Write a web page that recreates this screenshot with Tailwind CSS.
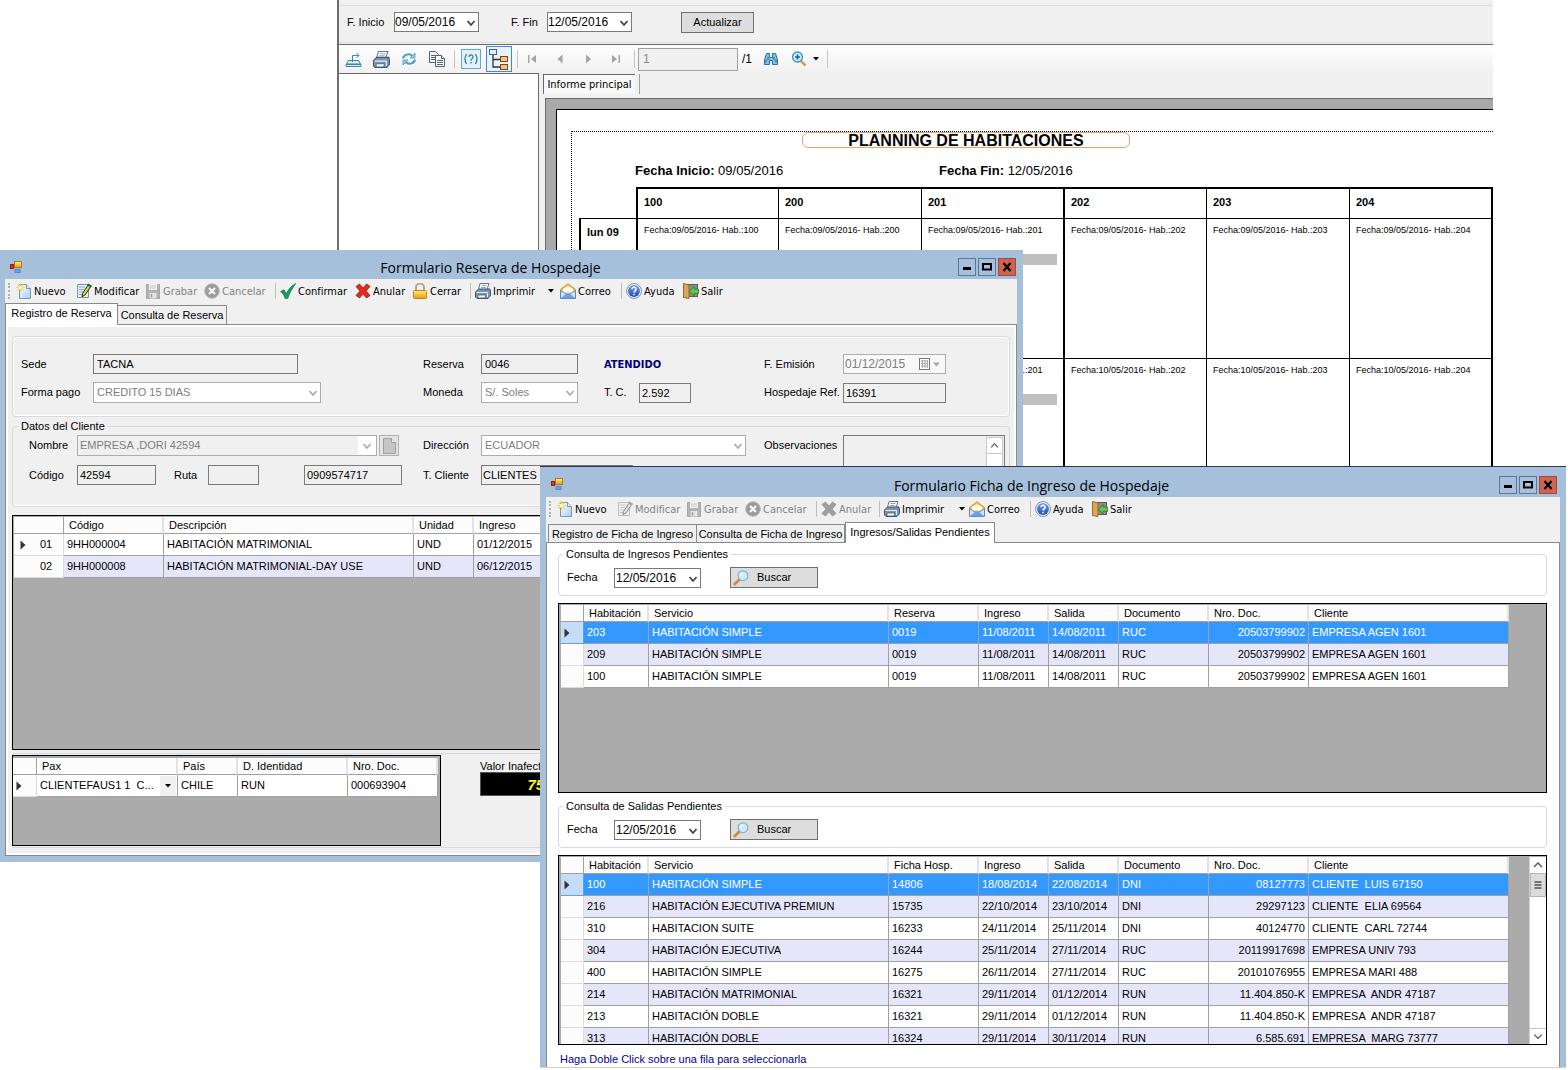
<!DOCTYPE html>
<html lang="es">
<head>
  <meta charset="UTF-8">
  <meta name="viewport" content="width=device-width, initial-scale=1.0">
  <title>Gestión de Hospedaje</title>
  <script src="https://cdn.jsdelivr.net/npm/@tailwindcss/browser@4"></script>
</head>
<body class="bg-white text-black text-[11px] leading-[13px] font-['Liberation_Sans',Arial,sans-serif]">

  <!-- shared icons -->
  <svg class="absolute size-0" aria-hidden="true">
    <defs>
      <linearGradient id="gPage" x1="0" y1="0" x2="1" y2="1"><stop offset="0" stop-color="#fff"/><stop offset="1" stop-color="#a9cdf5"/></linearGradient>
      <linearGradient id="gGold" x1="0" y1="0" x2="0" y2="1"><stop offset="0" stop-color="#fdf07a"/><stop offset="1" stop-color="#e89a10"/></linearGradient>
      <linearGradient id="gBlue" x1="0" y1="0" x2="0" y2="1"><stop offset="0" stop-color="#6f9be8"/><stop offset="1" stop-color="#1f4fb5"/></linearGradient>
    </defs>
    <symbol id="i-app" viewBox="0 0 14 14">
      <rect x="5.5" y="1.5" width="7" height="6" fill="url(#gGold)" stroke="#b07a1a"/>
      <rect x="1.5" y="4.5" width="3" height="4" fill="#d8382a" stroke="#8e1f14"/>
      <rect x="6" y="9.5" width="5" height="3" fill="#6d9fee" stroke="#5585d8"/>
    </symbol>
    <symbol id="i-new" viewBox="0 0 16 16">
      <path d="M3.5 1.5h7l4 4v10h-11z" fill="url(#gPage)" stroke="#7d95b5"/>
      <path d="M10.5 1.5v4h4" fill="#dcebfb" stroke="#7d95b5"/>
      <path d="M4.5 0v9M0 4.500h9M1.500 1.500l6 6M7.500 1.500l-6 6" stroke="#f0d860" stroke-width="1.2"/>
      <circle cx="4.5" cy="4.5" r="1.6" fill="#fffbd0"/>
    </symbol>
    <symbol id="i-edit" viewBox="0 0 16 16">
      <path d="M1.5 1.5h11v13h-11z" fill="#e6f0fb" stroke="#7a92b0"/>
      <path d="M3 4h6M3 6.5h5M3 9h4M3 11.5h7" stroke="#7fa6d6" stroke-width="1.2"/>
      <path d="M12.5 1.5l2.500 1.500-6 9-3 1.700.5-3.200z" fill="#d9df3c" stroke="#222"/>
      <path d="M11.500 1.500l4 2.200" stroke="#1b6a3a" stroke-width="2"/>
    </symbol>
    <symbol id="i-save" viewBox="0 0 16 16">
      <path d="M1.5 1.500h13v14h-13z" fill="#a4a4a4" stroke="#949494"/>
      <path d="M4 1h8v6H4z" fill="#efefef"/>
      <path d="M5 3h6M5 5h6" stroke="#c4c4c4"/>
      <path d="M4.500 10h7v5.500h-7z" fill="#e2e2e2"/>
      <path d="M6.500 11v3.500" stroke="#8a8a8a" stroke-width="1.500"/>
    </symbol>
    <symbol id="i-cancel" viewBox="0 0 16 16">
      <circle cx="8" cy="8" r="7.3" fill="#9b9b9b" stroke="#b9b9b9"/>
      <path d="M5 5l6 6M11 5l-6 6" stroke="#f6f6f6" stroke-width="2.3"/>
    </symbol>
    <symbol id="i-check" viewBox="0 0 16 16">
      <path d="M.5 8.500l3.500-1.800 2.300 3.800C8.500 6 11.500 2.500 15.800.5 12.500 5 9.800 9.500 7.800 15.500H5C4.200 12.500 2.700 10.200.5 8.500z" fill="#159a62" stroke="#0c7a4b" stroke-width=".6"/>
    </symbol>
    <symbol id="i-x" viewBox="0 0 16 16">
      <path d="M4.500 1L8 5l3.500-4L15 3.500 11 8l4 4.500-3.500 2.500L8 11l-3.500 4L1 12.500 5 8 1 3.500z" fill="#dd2c1e" stroke="#a5170c" stroke-width=".8"/>
    </symbol>
    <symbol id="i-lock" viewBox="0 0 16 16">
      <path d="M4 8V4.500a4 4 0 0 1 8 0V8" fill="none" stroke="#b0a98e" stroke-width="2"/>
      <rect x="1.500" y="7.500" width="13" height="8" rx="1" fill="url(#gGold)" stroke="#c58412"/>
    </symbol>
    <symbol id="i-print" viewBox="0 0 16 16">
      <path d="M5 .5h9l-2 6H3.500z" fill="#fff" stroke="#5f7896"/>
      <path d="M6.500 2.500h5M6 4.500h5" stroke="#8ba7c9"/>
      <path d="M.5 9l3-3h11.500l.5 3v3.500l-2.500 3H2l-1.500-1.500z" fill="#7d93b0" stroke="#3f5571"/>
      <path d="M1.500 9.500h11V14" fill="none" stroke="#e6edf5"/>
      <path d="M3 12h8l-1 3H3z" fill="#f5f8fb" stroke="#3f5571" stroke-width=".7"/>
    </symbol>
    <symbol id="i-mail" viewBox="0 0 16 16">
      <path d="M.5 6.500L8 .8l7.500 5.700v8.500H.5z" fill="#f6c56a" stroke="#c98b2c"/>
      <path d="M3 6L8 3.300 13 6v3.500H3z" fill="#fffbe9"/>
      <path d="M.5 7.500L6 11h4l5.500-3.500v8H.5z" fill="#cfe3fa" stroke="#5c88c4"/>
      <path d="M.8 15.200L6 11h4l5.200 4.200z" fill="#6f9fe0"/>
    </symbol>
    <symbol id="i-help" viewBox="0 0 16 16">
      <circle cx="8" cy="8" r="7.4" fill="#fff" stroke="#6f8cc0"/>
      <circle cx="8" cy="8" r="6" fill="url(#gBlue)"/>
      <path d="M6 6.300a2 2 0 1 1 3 1.700c-.8.5-1 .8-1 1.500M8 10.800v1.400" fill="none" stroke="#fff" stroke-width="1.6"/>
    </symbol>
    <symbol id="i-exit" viewBox="0 0 16 16">
      <rect x="5.5" y="1.500" width="9" height="12" fill="#8b8d88" stroke="#5c5c55"/>
      <path d="M.5.500l5.500 1.500v13.500l-5.500-1z" fill="#dba75c" stroke="#9a6a27"/>
      <path d="M15.500 6v4.500H11V13L6.500 8.200 11 3.500V6z" fill="#62c356" stroke="#2b7a26" stroke-width=".8"/>
    </symbol>
    <symbol id="i-search" viewBox="0 0 16 16">
      <path d="M6.500 9.500L1.800 14" stroke="#d68a3c" stroke-width="3" stroke-linecap="round"/>
      <circle cx="10" cy="5.700" r="4.900" fill="#cfeafb" stroke="#8aaed0" stroke-width="1.2"/>
      <path d="M7.500 5.500A2.700 2.700 0 0 1 10 3" fill="none" stroke="#fff" stroke-width="1.3"/>
    </symbol>
    <symbol id="i-chev" viewBox="0 0 10 10"><path d="M1.500 3L5 7l3.500-4" fill="none" stroke="currentColor" stroke-width="1.8"/></symbol>
    <symbol id="i-caret" viewBox="0 0 6 4"><path d="M0 0h6L3 3.500z" fill="currentColor"/></symbol>
    <symbol id="i-row" viewBox="0 0 6 10"><path d="M.5.500v9L5.500 5z" fill="#333"/></symbol>
    <symbol id="i-min" viewBox="0 0 16 16"><path d="M4 9.500h8" stroke="#000" stroke-width="3"/></symbol>
    <symbol id="i-max" viewBox="0 0 16 16"><rect x="4" y="5" width="8" height="5.500" fill="none" stroke="#000" stroke-width="2"/></symbol>
    <symbol id="i-close" viewBox="0 0 16 16"><path d="M4.500 4l7 8M11.500 4l-7 8" stroke="#000" stroke-width="2.2"/></symbol>
  </svg>

  <main class="relative min-h-screen overflow-hidden">

    <!-- Planning -->
    <section class="absolute top-0 left-[337px] right-[75px] overflow-hidden border-l-2 border-[#6e6e6e] bg-[#f0f0f0]">
      <div class="h-[5px]"></div>
      <div class="flex h-[38px] items-center border-y border-[#d9dde2] pb-1 pl-2">
        <label for="ini" class="w-[47px]">F. Inicio</label>
        <span class="relative">
          <select id="ini" class="block h-5 w-[85px] appearance-none border border-[#7a7a7a] bg-white text-[12px] leading-4"><option>09/05/2016</option></select>
          <svg class="pointer-events-none absolute top-[6px] right-[3px] size-[10px] text-[#444]"><use href="#i-chev"/></svg>
        </span>
        <label for="fin" class="ml-8 w-9">F. Fin</label>
        <span class="relative">
          <select id="fin" class="block h-5 w-[85px] appearance-none border border-[#7a7a7a] bg-white text-[12px] leading-4"><option>12/05/2016</option></select>
          <svg class="pointer-events-none absolute top-[6px] right-[3px] size-[10px] text-[#444]"><use href="#i-chev"/></svg>
        </span>
        <button class="ml-[49px] h-[21px] w-[73px] border border-[#707070] bg-[#dddddd]">Actualizar</button>
      </div>
      <div class="h-0.5 border-b border-[#696969]"></div>
      <div class="flex h-7 items-center bg-linear-to-b from-white to-[#f0f0f0]">
        <button aria-label="Exportar" class="flex w-7 justify-center"><svg class="size-[17px]" viewBox="0 0 17 17" fill="none" stroke="#3d87a8"><path d="M3.5 9.500h10l2 3.500H1.500zM1 13.500h15v2H1z" fill="#d8eef6"/><path d="M7.500 11V4.500h6M11.500 2L14 4.500 11.500 7"/></svg></button>
        <button aria-label="Imprimir informe" class="flex w-7 justify-center"><svg class="size-[17px]"><use href="#i-print"/></svg></button>
        <button aria-label="Refrescar" class="flex w-7 justify-center"><svg class="size-4" viewBox="0 0 16 16" fill="none" stroke="#4a9cc4" stroke-width="2"><path d="M2 7.500C2.500 4 8 1.500 11.500 5M14 8.500C13.500 12 8 14.500 4.500 11"/><path d="M14 2v5H9zM2 14V9h5z" fill="#8fd0ea" stroke-width=".8"/></svg></button>
        <button aria-label="Copiar" class="flex w-7 justify-center"><svg class="size-[18px]" viewBox="0 0 18 18" fill="#fff" stroke="#4c6378"><path d="M1.500 1.500h6l3 3v8h-9z"/><path d="M3 5.500h5M3 7.500h5M3 9.500h4"/><path d="M7.500 5.500h6l3 3v8h-9z"/><path d="M13.500 5.500v3h3M9 10.500h6M9 12.500h6M9 14.500h6"/></svg></button>
        <span class="ml-[3px] h-[18px] w-px bg-[#c4c4c4]"></span>
        <button aria-label="Parámetros" class="ml-1.5 h-5 w-5 border border-[#5fa8d8] bg-[#e2f1fb]"><svg class="size-[18px]" viewBox="0 0 18 18" fill="none" stroke="#2f7fb0" stroke-width="1.3"><path d="M4.500 4q-3 5 0 10M13.500 4q3 5 0 10M7 7a2 2 0 1 1 3 1.700q-1 .7-1 2M9 12v1.500"/></svg></button>
        <button aria-label="Árbol de grupos" class="ml-[5px] flex h-[26px] w-[26px] items-center justify-center border border-[#3c8ad6] bg-[#e9f3fc]"><svg class="size-[22px]" viewBox="0 0 22 22"><path d="M5 7v12h7M5 11.500h7" fill="none" stroke="#333" stroke-width="1.3"/><rect x="1.500" y="1.500" width="7" height="5" fill="#e4edfb" stroke="#4a5f9a"/><rect x="12.500" y="8.500" width="7" height="5" fill="#f3c48a" stroke="#7a4a16"/><rect x="12.500" y="16.500" width="7" height="5" fill="#f3c48a" stroke="#7a4a16"/></svg></button>
        <span class="ml-[5px] h-[18px] w-px bg-[#c4c4c4]"></span>
        <button disabled aria-label="Primera" class="flex w-7 justify-center"><svg class="size-[10px]" viewBox="0 0 10 10" fill="#a3a3a3"><path d="M1 1h1.500v8H1zM9 1v8L4 5z"/></svg></button>
        <button disabled aria-label="Anterior" class="flex w-7 justify-center"><svg class="size-[10px]" viewBox="0 0 10 10" fill="#a3a3a3"><path d="M7.500.5v9L2.500 5z"/></svg></button>
        <button disabled aria-label="Siguiente" class="flex w-7 justify-center"><svg class="size-[10px]" viewBox="0 0 10 10" fill="#a3a3a3"><path d="M3 .5v9L8 5z"/></svg></button>
        <button disabled aria-label="Última" class="flex w-7 justify-center"><svg class="size-[10px]" viewBox="0 0 10 10" fill="#a3a3a3"><path d="M7.500 1H9v8H7.500zM1 1v8l5-4z"/></svg></button>
        <span class="ml-1 h-[18px] w-px bg-[#c4c4c4]"></span>
        <input aria-label="Página" value="1" class="ml-[3px] h-[23px] w-[100px] border border-[#a0a0a0] bg-[#f0f0f0] px-1 text-[12px] text-[#8a8a8a]">
        <span class="ml-1 w-[15px] text-[12px]">/1</span>
        <button aria-label="Buscar texto" class="flex w-7 justify-center"><svg class="size-4" viewBox="0 0 16 16" fill="#7fc4e4" stroke="#2d6f9c"><path d="M3.500 2.500h3v4h3v-4h3l2 6v5h-5v-4h-3v4h-5v-5z"/><path d="M3 8.500v3M5 6v3M11 6v3M13 8.500v3" stroke="#1d5f8c"/></svg></button>
        <button aria-label="Zoom" class="flex w-7 justify-center"><svg class="size-4" viewBox="0 0 16 16"><path d="M10 10l4.500 4.500" stroke="#d99a55" stroke-width="2.5"/><circle cx="6.500" cy="6" r="5" fill="#c8ebf8" stroke="#3b93c4" stroke-width="1.3"/><path d="M6.500 3.500v5M4 6h5" stroke="#1d5f9c" stroke-width="1.5"/></svg></button>
        <svg class="h-1 w-1.5"><use href="#i-caret"/></svg>
        <span class="ml-2 h-[18px] w-px bg-[#c4c4c4]"></span>
      </div>
      <div class="flex">
        <div class="w-[200px] shrink-0 border-t border-r border-[#696969] bg-white"></div>
        <div class="min-w-0 flex-1 pl-1">
          <div class="flex h-[25px] items-start gap-1 pt-px">
            <button class="h-5 w-[92px] border-t border-l border-[#696969] bg-[#f8f8f8] font-['DejaVu_Sans_Condensed','DejaVu_Sans',sans-serif] whitespace-nowrap">Informe principal</button>
            <span class="h-5 w-px bg-[#a0a0a0]"></span>
          </div>
          <div class="ml-0.5 overflow-hidden border-t border-l border-[#696969] bg-[#a9a9a9] pt-[10px] pl-[10px]">
            <div class="border-t border-l border-black bg-white pt-[21px] pl-[14px]">
              <div class="border-t border-l border-dotted border-black">
                <h1 class="ml-[230px] h-4 w-[328px] rounded-md border border-[#e0a468] text-center text-[16px] leading-4 font-bold whitespace-nowrap">PLANNING DE HABITACIONES</h1>
                <div class="mt-[15px] ml-[63px] flex text-[13px] leading-4">
                  <p class="w-[304px]"><b>Fecha Inicio:</b> 09/05/2016</p>
                  <p><b>Fecha Fin:</b> 12/05/2016</p>
                </div>
                <table id="planning" class="mt-2 ml-[7px] w-[914px] table-fixed border-separate border-spacing-0 text-left">
                  <colgroup><col class="w-[57px]"><col class="w-[142px]"><col class="w-[143px]"><col class="w-[142px]"><col class="w-[143px]"><col class="w-[143px]"><col class="w-[144px]"></colgroup>
                  <thead></thead>
                  <tbody></tbody>
                </table>
              </div>
            </div>
          </div>
        </div>
      </div>
    </section>

    <!-- Reserva de Hospedaje -->
    <section class="absolute top-[250px] left-0 w-[1023px] bg-[#a6c0dc] pr-1.5 pb-1.5 pl-[5px]">
      <header class="flex h-[29px] items-center">
        <svg class="mt-1 ml-1 size-[14px]"><use href="#i-app"/></svg>
        <h2 class="mt-1.5 flex-1 text-center font-['Open_Sans',sans-serif] text-[14px] leading-5">Formulario Reserva de Hospedaje</h2>
        <div class="mt-1 mr-px flex gap-0.5">
          <button aria-label="Minimizar" class="size-[18px] border border-[#5b7796]"><svg class="size-4"><use href="#i-min"/></svg></button>
          <button aria-label="Maximizar" class="size-[18px] border border-[#5b7796]"><svg class="size-4"><use href="#i-max"/></svg></button>
          <button aria-label="Cerrar ventana" class="size-[18px] border border-[#a04a3c] bg-[#cf6350]"><svg class="size-4"><use href="#i-close"/></svg></button>
        </div>
      </header>
      <div class="bg-[#f0f0f0]">
        <div class="flex h-6 items-center pl-[3px] font-['DejaVu_Sans_Condensed','DejaVu_Sans',sans-serif]">
          <span class="mr-1.5 h-4 border-l-2 border-dotted border-[#b0b0b0]"></span>
          <button class="flex w-[60px] items-center gap-0.5"><svg class="size-4 shrink-0"><use href="#i-new"/></svg>Nuevo</button>
          <button class="flex w-[69px] items-center gap-0.5"><svg class="size-4 shrink-0"><use href="#i-edit"/></svg>Modificar</button>
          <button disabled class="flex w-[59px] items-center gap-0.5 text-[#838383]"><svg class="size-4 shrink-0 opacity-80"><use href="#i-save"/></svg>Grabar</button>
          <button disabled class="flex w-[71px] items-center gap-0.5 text-[#838383]"><svg class="size-4 shrink-0"><use href="#i-cancel"/></svg>Cancelar</button>
          <span class="mr-1 h-4 w-px bg-[#bdbdbd]"></span>
          <button class="flex w-[75px] items-center gap-0.5"><svg class="size-4 shrink-0"><use href="#i-check"/></svg>Confirmar</button>
          <button class="flex w-[57px] items-center gap-0.5"><svg class="size-4 shrink-0"><use href="#i-x"/></svg>Anular</button>
          <button class="flex w-[58px] items-center gap-0.5"><svg class="size-4 shrink-0"><use href="#i-lock"/></svg>Cerrar</button>
          <span class="mr-1 h-4 w-px bg-[#bdbdbd]"></span>
          <button class="flex w-[85px] items-center gap-0.5"><svg class="size-4 shrink-0"><use href="#i-print"/></svg>Imprimir<svg class="mr-1.5 ml-auto h-1 w-1.5"><use href="#i-caret"/></svg></button>
          <button class="flex w-[61px] items-center gap-0.5"><svg class="size-4 shrink-0"><use href="#i-mail"/></svg>Correo</button>
          <span class="mr-1 h-4 w-px bg-[#bdbdbd]"></span>
          <button class="flex w-[57px] items-center gap-0.5"><svg class="size-4 shrink-0"><use href="#i-help"/></svg>Ayuda</button>
          <button class="flex items-center gap-0.5"><svg class="size-4 shrink-0"><use href="#i-exit"/></svg>Salir</button>
        </div>
        <div class="flex h-[21px] items-end">
          <button class="z-10 -mb-px h-[22px] w-[113px] border border-b-0 border-[#8a8a8a] bg-white pb-0.5">Registro de Reserva</button>
          <button class="h-[19px] w-[109px] border border-b-0 border-l-0 border-[#8a8a8a] bg-[#f0f0f0] pt-px whitespace-nowrap">Consulta de Reserva</button>
        </div>
        <div class="border border-[#8a8a8a] bg-white p-[2px]">
          <div class="bg-[#f0f0f0] px-1 pt-[9px] pb-[5px]">
            <div class="grid h-[81px] grid-cols-[72px_330px_58px_123px_35px_125px_79px_1fr] content-start items-center gap-y-2 rounded-sm border border-[#d5dae0] pt-[17px] pl-2 shadow-[inset_0_0_0_1px_#fff]">
              <label for="sede">Sede</label>
              <input id="sede" readonly value="TACNA" class="h-5 w-[205px] border border-[#7a7a7a] bg-[#f0f0f0] px-[3px]">
              <label for="reserva">Reserva</label>
              <input id="reserva" readonly value="0046" class="h-5 w-[97px] border border-[#7a7a7a] bg-[#f0f0f0] px-[3px]">
              <strong class="col-span-2 font-['DejaVu_Sans_Condensed','DejaVu_Sans',sans-serif] text-[#000080]">ATENDIDO</strong>
              <label for="emision">F. Emisión</label>
              <span class="relative w-[103px]">
                <input id="emision" disabled value="01/12/2015" class="block h-5 w-full border border-[#adadad] bg-[#f8f8f8] px-px text-[12px] text-[#7d7d7d]">
                <svg class="absolute top-1 right-[5px] h-3 w-[22px]" viewBox="0 0 22 12"><rect x=".5" y=".5" width="10" height="11" fill="#fff" stroke="#777"/><path d="M2 3h7M2 5.500h7M2 8h7M3.500 2v8M6 2v8M8.500 2v8" stroke="#aaa"/><path d="M14 4.500h7l-3.500 4z" fill="#a8a8a8"/></svg>
              </span>
              <label for="pago">Forma pago</label>
              <span class="relative w-[228px]">
                <select id="pago" disabled class="block h-[21px] w-full appearance-none border border-[#adadad] bg-white px-[3px] text-[#7d7d7d] opacity-100"><option>CREDITO 15 DIAS</option></select>
                <svg class="absolute top-[6px] right-[3px] size-[10px] text-[#ababab]"><use href="#i-chev"/></svg>
              </span>
              <label for="moneda">Moneda</label>
              <span class="relative w-[97px]">
                <select id="moneda" disabled class="block h-[21px] w-full appearance-none border border-[#adadad] bg-white px-[3px] text-[#7d7d7d] opacity-100"><option>S/. Soles</option></select>
                <svg class="absolute top-[6px] right-[3px] size-[10px] text-[#ababab]"><use href="#i-chev"/></svg>
              </span>
              <label for="tc">T. C.</label>
              <input id="tc" readonly value="2.592" class="h-5 w-[52px] border border-[#7a7a7a] bg-[#f0f0f0] px-[2px]">
              <label for="ref" class="whitespace-nowrap">Hospedaje Ref.</label>
              <input id="ref" readonly value="16391" class="h-5 w-[103px] border border-[#7a7a7a] bg-[#f0f0f0] px-[2px]">
            </div>
            <fieldset class="mt-[3px] h-[87px] rounded-sm border border-[#d5dae0] pl-4 shadow-[inset_0_-1px_0_#fff]">
              <legend class="-ml-2.5 px-0.5">Datos del Cliente</legend>
              <div class="grid grid-cols-[48px_346px_58px_283px_79px_1fr] items-center gap-y-[9px] pt-0.5">
                <label for="nombre">Nombre</label>
                <span class="flex gap-0.5">
                  <span class="relative w-[300px]">
                    <select id="nombre" disabled class="block h-[21px] w-full appearance-none border border-[#adadad] bg-[#f0f0f0] px-[2px] text-[#7d7d7d] opacity-100"><option>EMPRESA ,DORI 42594</option></select>
                    <span class="absolute top-px right-px flex h-[19px] w-[18px] items-center justify-center bg-white"><svg class="size-[10px] text-[#ababab]"><use href="#i-chev"/></svg></span>
                  </span>
                  <button aria-label="Nuevo cliente" class="flex h-[21px] w-5 items-center justify-center border border-[#b0b0b0] bg-[#e4e4e4]"><svg class="h-4 w-[14px]" viewBox="0 0 14 16"><path d="M1.500.500h8l4 4v11h-12z" fill="#c6c6c6" stroke="#a0a0a0"/><path d="M9.500.500v4h4" fill="#f0f0f0" stroke="#a0a0a0"/></svg></button>
                </span>
                <label for="direccion">Dirección</label>
                <span class="relative w-[265px]">
                  <select id="direccion" disabled class="block h-[21px] w-full appearance-none border border-[#adadad] bg-white px-[3px] text-[#7d7d7d] opacity-100"><option>ECUADOR</option></select>
                  <svg class="absolute top-[6px] right-[3px] size-[10px] text-[#ababab]"><use href="#i-chev"/></svg>
                </span>
                <label for="obs">Observaciones</label>
                <span class="relative row-span-2 w-[162px]">
                  <textarea id="obs" class="block h-[50px] w-full resize-none border border-[#7a7a7a] bg-[#f0f0f0]"></textarea>
                  <span class="absolute top-0.5 right-0.5 h-[46px] w-[17px] border border-[#c8c8c8] bg-white"><svg class="h-4 w-[15px] border-b border-[#c8c8c8]" viewBox="0 0 15 16"><path d="M4 10l3.500-4 3.500 4" fill="none" stroke="#606060" stroke-width="1.3"/></svg></span>
                </span>
                <label for="codigo">Código</label>
                <span class="flex items-center">
                  <input id="codigo" readonly value="42594" class="h-5 w-[79px] border border-[#7a7a7a] bg-[#f0f0f0] px-[2px]">
                  <label for="ruta" class="ml-[18px] w-[34px]">Ruta</label>
                  <input id="ruta" readonly class="h-5 w-[51px] border border-[#7a7a7a] bg-[#f0f0f0]">
                  <input aria-label="Documento" readonly value="0909574717" class="ml-[45px] h-5 w-[98px] border border-[#7a7a7a] bg-[#f0f0f0] px-[2px]">
                </span>
                <label for="tcliente">T. Cliente</label>
                <input id="tcliente" readonly value="CLIENTES EMPRESA" class="h-5 w-[152px] border border-[#7a7a7a] bg-[#f0f0f0] px-px">
              </div>
            </fieldset>
            <div class="mt-2 h-[235px] overflow-hidden border border-black bg-[#ababab] pt-px pl-px">
              <table id="detalle" class="w-[570px] table-fixed border-separate border-spacing-0 text-left">
                <colgroup><col class="w-[50px]"><col class="w-[100px]"><col class="w-[250px]"><col class="w-[60px]"><col class="w-[110px]"></colgroup>
                <thead></thead>
                <tbody></tbody>
              </table>
            </div>
            <div class="mt-[3px] flex gap-[39px] border-y border-[#d5dae0] py-px">
              <div class="h-[91px] w-[429px] border border-black bg-[#ababab] pt-0.5">
                <table id="pax" class="w-[425px] table-fixed border-separate border-spacing-0 text-left">
                  <colgroup><col class="w-6"><col class="w-[141px]"><col class="w-[60px]"><col class="w-[110px]"><col class="w-[90px]"></colgroup>
                  <thead></thead>
                  <tbody></tbody>
                </table>
              </div>
              <div class="pt-[5px]">
                <label for="inafecto" class="block h-3 leading-3">Valor Inafecto</label>
                <input id="inafecto" readonly value="75.00" class="h-6 w-[90px] border border-[#555] bg-black pr-1 text-right text-[15px] font-bold text-[#ffff00] italic">
              </div>
            </div>
          </div>
        </div>
      </div>
    </section>

    <!-- Ficha de Ingreso -->
    <section class="absolute top-[466px] right-[2px] left-[540px] border-t border-b border-t-[#2d3b49] border-b-[#cfcfcf] bg-[#a6c0dc] px-1.5">
      <header class="flex h-[30px] items-center">
        <svg class="mt-1 ml-1 size-[14px]"><use href="#i-app"/></svg>
        <h2 class="mt-2 flex-1 text-center font-['Open_Sans',sans-serif] text-[14px] leading-5">Formulario Ficha de Ingreso de Hospedaje</h2>
        <div class="mt-1.5 mr-[3px] flex gap-0.5">
          <button aria-label="Minimizar" class="size-[18px] border border-[#5b7796]"><svg class="size-4"><use href="#i-min"/></svg></button>
          <button aria-label="Maximizar" class="size-[18px] border border-[#5b7796]"><svg class="size-4"><use href="#i-max"/></svg></button>
          <button aria-label="Cerrar ventana" class="size-[18px] border border-[#a04a3c] bg-[#cf6350]"><svg class="size-4"><use href="#i-close"/></svg></button>
        </div>
      </header>
      <div class="bg-[#f0f0f0]">
        <div class="flex h-6 items-center pl-[3px] font-['DejaVu_Sans_Condensed','DejaVu_Sans',sans-serif]">
          <span class="mr-1.5 h-4 border-l-2 border-dotted border-[#b0b0b0]"></span>
          <button class="flex w-[60px] items-center gap-0.5"><svg class="size-4 shrink-0"><use href="#i-new"/></svg>Nuevo</button>
          <button disabled class="flex w-[69px] items-center gap-0.5 text-[#838383]"><svg class="size-4 shrink-0 opacity-50 grayscale"><use href="#i-edit"/></svg>Modificar</button>
          <button disabled class="flex w-[59px] items-center gap-0.5 text-[#838383]"><svg class="size-4 shrink-0 opacity-80"><use href="#i-save"/></svg>Grabar</button>
          <button disabled class="flex w-[71px] items-center gap-0.5 text-[#838383]"><svg class="size-4 shrink-0"><use href="#i-cancel"/></svg>Cancelar</button>
          <span class="mr-1 h-4 w-px bg-[#bdbdbd]"></span>
          <button disabled class="flex w-[58px] items-center gap-0.5 text-[#838383]"><svg class="size-4 shrink-0 opacity-50 grayscale"><use href="#i-x"/></svg>Anular</button>
          <span class="mr-1 h-4 w-px bg-[#bdbdbd]"></span>
          <button class="flex w-[85px] items-center gap-0.5"><svg class="size-4 shrink-0"><use href="#i-print"/></svg>Imprimir<svg class="mr-1 ml-auto h-1 w-1.5"><use href="#i-caret"/></svg></button>
          <button class="flex w-[61px] items-center gap-0.5"><svg class="size-4 shrink-0"><use href="#i-mail"/></svg>Correo</button>
          <span class="mr-1 h-4 w-px bg-[#bdbdbd]"></span>
          <button class="flex w-[57px] items-center gap-0.5"><svg class="size-4 shrink-0"><use href="#i-help"/></svg>Ayuda</button>
          <button class="flex items-center gap-0.5"><svg class="size-4 shrink-0"><use href="#i-exit"/></svg>Salir</button>
        </div>
        <div class="flex h-[21px] items-end pl-0.5">
          <button class="h-[18px] w-[149px] border border-b-0 border-[#8a8a8a] pt-px whitespace-nowrap">Registro de Ficha de Ingreso</button>
          <button class="h-[18px] w-[148px] border border-b-0 border-l-0 border-[#8a8a8a] pt-px whitespace-nowrap">Consulta de Ficha de Ingreso</button>
          <button class="z-10 -mb-px h-[21px] w-[150px] border border-b-0 border-[#8a8a8a] bg-white pb-0.5 whitespace-nowrap">Ingresos/Salidas Pendientes</button>
        </div>
        <div class="border border-b-0 border-[#8a8a8a] bg-white pt-[5px] pr-3 pb-px pl-[11px]">
          <fieldset class="h-12 rounded-sm border border-[#d5dae0]">
            <legend class="ml-1 px-[3px]">Consulta de Ingresos Pendientes</legend>
            <div class="flex items-center pt-1.5 pl-2">
              <label for="f1" class="w-[47px]">Fecha</label>
              <span class="relative">
                <select id="f1" class="block h-5 w-[87px] appearance-none border border-[#7a7a7a] bg-white px-px text-[12px] leading-4"><option>12/05/2016</option></select>
                <svg class="pointer-events-none absolute top-[6px] right-[3px] size-[10px] text-[#444]"><use href="#i-chev"/></svg>
              </span>
              <button class="ml-[29px] flex h-[21px] w-[88px] items-center gap-2 border border-[#707070] bg-[#dddddd] pl-0.5"><svg class="size-4"><use href="#i-search"/></svg>Buscar</button>
            </div>
          </fieldset>
          <div class="mt-[7px] h-[190px] overflow-hidden border border-black bg-[#ababab] pt-px pl-0.5">
            <table id="ingresos" class="w-[948px] table-fixed border-separate border-spacing-0 text-left">
              <colgroup><col class="w-[23px]"><col class="w-[65px]"><col class="w-[240px]"><col class="w-[90px]"><col class="w-[70px]"><col class="w-[70px]"><col class="w-[90px]"><col class="w-[100px]"><col class="w-[200px]"></colgroup>
              <thead></thead>
              <tbody></tbody>
            </table>
          </div>
          <fieldset class="mt-[7px] h-12 rounded-sm border border-[#d5dae0]">
            <legend class="ml-1 px-[3px]">Consulta de Salidas Pendientes</legend>
            <div class="flex items-center pt-1.5 pl-2">
              <label for="f2" class="w-[47px]">Fecha</label>
              <span class="relative">
                <select id="f2" class="block h-5 w-[87px] appearance-none border border-[#7a7a7a] bg-white px-px text-[12px] leading-4"><option>12/05/2016</option></select>
                <svg class="pointer-events-none absolute top-[6px] right-[3px] size-[10px] text-[#444]"><use href="#i-chev"/></svg>
              </span>
              <button class="ml-[29px] flex h-[21px] w-[88px] items-center gap-2 border border-[#707070] bg-[#dddddd] pl-0.5"><svg class="size-4"><use href="#i-search"/></svg>Buscar</button>
            </div>
          </fieldset>
          <div class="mt-[7px] flex h-[190px] justify-between overflow-hidden border border-black bg-[#ababab] pt-px pl-0.5">
            <table id="salidas" class="w-[948px] shrink-0 table-fixed border-separate border-spacing-0 self-start text-left">
              <colgroup><col class="w-[23px]"><col class="w-[65px]"><col class="w-[240px]"><col class="w-[90px]"><col class="w-[70px]"><col class="w-[70px]"><col class="w-[90px]"><col class="w-[100px]"><col class="w-[200px]"></colgroup>
              <thead></thead>
              <tbody></tbody>
            </table>
            <div class="flex w-[17px] flex-col border-l border-[#d0d0d0] bg-white">
              <svg class="h-4 w-4" viewBox="0 0 16 16"><path d="M4 10l4-4 4 4" fill="none" stroke="#505050" stroke-width="1.3"/></svg>
              <svg class="h-6 w-4 border border-[#b5b5b5] bg-[#dcdcdc]" viewBox="0 0 14 22"><path d="M3.500 8h7M3.500 11h7M3.500 14h7" stroke="#505050" stroke-width="1.5"/></svg>
              <svg class="mt-auto h-4 w-4 border-t border-[#c8c8c8]" viewBox="0 0 16 16"><path d="M4 6l4 4 4-4" fill="none" stroke="#505050" stroke-width="1.3"/></svg>
            </div>
          </div>
          <p class="mt-2 ml-0.5 text-[#000099]">Haga Doble Click sobre una fila para seleccionarla</p>
        </div>
      </div>
    </section>
  </main>

  <script>
    const arrow = '<svg class="ml-[3px] h-[10px] w-[6px]"><use href="#i-row"/></svg>';

    // opts: number = numbered rows, select = first row highlighted, right = right-aligned column
    function fillGrid(id, cols, rows, opts = {}) {
      const table = document.getElementById(id);
      const th = cols.map(c => `<th class="h-[17px] border-r-2 border-b border-r-[#e3e3e3] border-b-[#a0a0a0] bg-[#fcfcfc] p-0 pl-[5px] font-normal whitespace-nowrap">${c}</th>`).join('');
      table.tHead.innerHTML = `<tr><th class="border-r border-b border-[#a0a0a0] bg-[#fcfcfc] p-0"></th>${th}</tr>`;
      table.tBodies[0].innerHTML = rows.map((r, i) => {
        const selected = opts.select && i === 0;
        const tone = selected ? 'bg-[#3399ff] text-white' : i % 2 ? 'bg-[#e6e6fa]' : 'bg-white';
        const markTone = selected ? 'bg-[#c5dcf8] border-[#5fa3d8]' : 'bg-[#fcfcfc] border-[#dcdcdc]';
        const mark = opts.number
          ? `<span class="flex items-center pl-1.5"><span class="w-5">${i === 0 ? '<svg class="h-[10px] w-[6px]"><use href="#i-row"/></svg>' : ''}</span>0${i + 1}</span>`
          : (i === 0 ? arrow : '');
        const tds = r.map((v, j) => `<td class="h-[22px] overflow-hidden border-r border-b border-[#a0a0a0] px-[3px] py-0 whitespace-pre ${j === opts.right ? 'text-right' : ''}">${v}</td>`).join('');
        return `<tr class="${tone}"><td class="border-r border-b p-0 ${markTone}">${mark}</td>${tds}</tr>`;
      }).join('');
    }

    fillGrid('detalle', ['Código', 'Descripción', 'Unidad', 'Ingreso'], [
      ['9HH000004', 'HABITACIÓN MATRIMONIAL', 'UND', '01/12/2015'],
      ['9HH000008', 'HABITACIÓN MATRIMONIAL-DAY USE', 'UND', '06/12/2015'],
    ], { number: true });

    const paxName = '<span class="flex items-center justify-between">CLIENTEFAUS1 1  C...<button aria-label="Elegir pax" class="-mr-0.5 flex h-5 w-4 items-center justify-center bg-[#f0f0f0]"><svg class="h-1 w-1.5"><use href="#i-caret"/></svg></button></span>';
    fillGrid('pax', ['Pax', 'País', 'D. Identidad', 'Nro. Doc.'], [[paxName, 'CHILE', 'RUN', '000693904']]);

    const rest = ['Ingreso', 'Salida', 'Documento', 'Nro. Doc.', 'Cliente'];
    fillGrid('ingresos', ['Habitación', 'Servicio', 'Reserva', ...rest], ['203', '209', '100'].map(h =>
      [h, 'HABITACIÓN SIMPLE', '0019', '11/08/2011', '14/08/2011', 'RUC', '20503799902', 'EMPRESA AGEN 1601']
    ), { select: true, right: 6 });

    fillGrid('salidas', ['Habitación', 'Servicio', 'Ficha Hosp.', ...rest], [
      ['100', 'HABITACIÓN SIMPLE', '14806', '18/08/2014', '22/08/2014', 'DNI', '08127773', 'CLIENTE  LUIS 67150'],
      ['216', 'HABITACIÓN EJECUTIVA PREMIUN', '15735', '22/10/2014', '23/10/2014', 'DNI', '29297123', 'CLIENTE  ELIA 69564'],
      ['310', 'HABITACION SUITE', '16233', '24/11/2014', '25/11/2014', 'DNI', '40124770', 'CLIENTE  CARL 72744'],
      ['304', 'HABITACIÓN EJECUTIVA', '16244', '25/11/2014', '27/11/2014', 'RUC', '20119917698', 'EMPRESA UNIV 793'],
      ['400', 'HABITACIÓN SIMPLE', '16275', '26/11/2014', '27/11/2014', 'RUC', '20101076955', 'EMPRESA MARI 488'],
      ['214', 'HABITACIÓN MATRIMONIAL', '16321', '29/11/2014', '01/12/2014', 'RUN', '11.404.850-K', 'EMPRESA  ANDR 47187'],
      ['213', 'HABITACIÓN DOBLE', '16321', '29/11/2014', '01/12/2014', 'RUN', '11.404.850-K', 'EMPRESA  ANDR 47187'],
      ['313', 'HABITACIÓN DOBLE', '16324', '29/11/2014', '30/11/2014', 'RUN', '6.585.691', 'EMPRESA  MARG 73777'],
    ], { select: true, right: 6 });

    // planning matrix: days x rooms
    const rooms = ['100', '200', '201', '202', '203', '204'];
    const days = [
      { name: 'lun 09', date: '09/05/2016', from: 0 },
      { name: '', date: '10/05/2016', from: 2 },
    ];
    const edge = i => (i === 0 || i === 3 ? 'border-l-2' : 'border-l') + (i === 5 ? ' border-r-2' : '');
    const planning = document.getElementById('planning');
    planning.tHead.innerHTML = '<tr><th></th>' + rooms.map((r, i) =>
      `<th class="h-[31px] border-t-2 border-black p-0 pb-0.5 pl-[6px] font-bold ${edge(i)}">${r}</th>`).join('') + '</tr>';
    planning.tBodies[0].innerHTML = days.map(d =>
      `<tr class="align-top"><th class="h-[140px] border-t border-l-2 border-black p-0 pt-[7px] pl-1.5 font-bold">${d.name}</th>` + rooms.map((r, i) =>
        `<td class="border-t border-black p-0 pt-[5px] pl-[6px] text-[9px] leading-3 whitespace-nowrap ${edge(i)}">${i >= d.from ? `Fecha:${d.date}- Hab.:${r}` : ''}${r === '201' ? '<div class="mt-[18px] mr-1.5 h-[11px] bg-[#c0c0c0]"></div>' : ''}</td>`).join('') + '</tr>').join('');
  </script>
</body>
</html>
